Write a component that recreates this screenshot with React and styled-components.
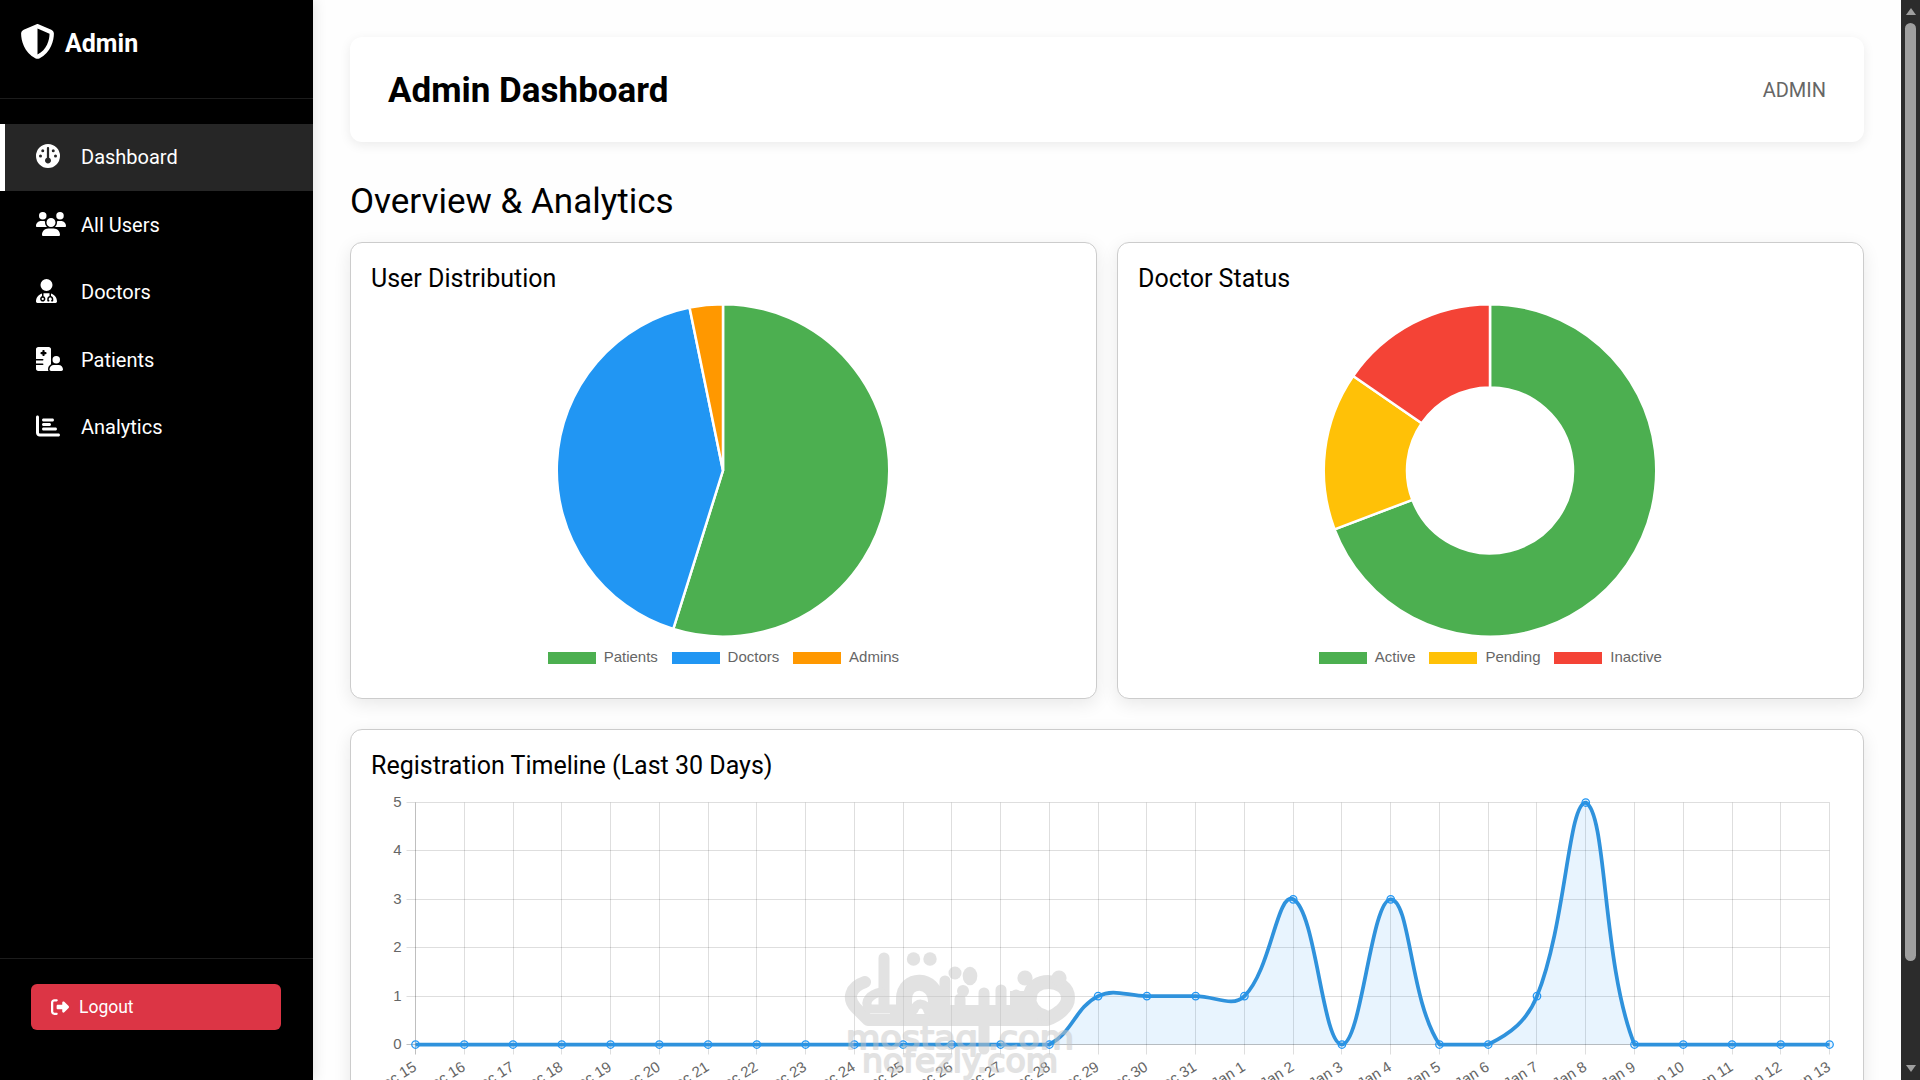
import React from "react";
import styled, { createGlobalStyle } from "styled-components";
import {
  FaShieldHalved,
  FaGauge,
  FaUsers,
  FaUserDoctor,
  FaHospitalUser,
  FaChartBar,
  FaRightFromBracket,
} from "react-icons/fa6";

const GlobalStyle = createGlobalStyle`
  *, *::before, *::after { box-sizing: border-box; }
  body { margin: 0; background: #fefefe; color: #000; font-family: Roboto, sans-serif; }
  h1, h2, h3 { margin: 0; }
`;

const Page = styled.div`
  position: relative;
  display: flex;
  width: 1920px;
  height: 1080px;
  overflow: hidden;
`;

const Sidebar = styled.aside`
  display: flex;
  flex-direction: column;
  flex: none;
  width: 313px;
  background: #000;
  color: #fff;
  box-shadow: 2px 0 12px rgba(0, 0, 0, 0.1);
`;

const Brand = styled.div`
  display: flex;
  align-items: flex-start;
  gap: 10px;
  height: 99px;
  padding: 24px 20px 0;
  border-bottom: 1px solid #1c1c1c;
  font-size: 25px;
  font-weight: 700;
  line-height: 39px;
  svg { width: 35px; height: 35px; }
`;

const Nav = styled.nav`
  display: flex;
  flex: 1;
  flex-direction: column;
  padding-top: 24.5px;
`;

const NavItem = styled.a`
  display: flex;
  align-items: center;
  height: 67.6px;
  padding: 0 0 0.5px 31px;
  border-left: 5px solid ${(p) => (p.$active ? "#fff" : "transparent")};
  background: ${(p) => (p.$active ? "#262626" : "transparent")};
  font-size: 20px;
`;

const NavIcon = styled.span`
  display: flex;
  flex: none;
  width: 45px;
  padding-bottom: 2px;
  svg { flex: none; width: ${(p) => p.$width}px; height: 24px; }
`;

const SidebarFooter = styled.div`
  height: 122px;
  padding: 25px 32px 0 31px;
  border-top: 1px solid #1c1c1c;
`;

const LogoutButton = styled.button`
  display: flex;
  align-items: center;
  gap: 10px;
  width: 100%;
  height: 46px;
  padding: 0 20px 1px;
  border: 0;
  border-radius: 6px;
  background: #dc3545;
  color: #fff;
  font: 400 17.5px Roboto, sans-serif;
  svg { width: 18px; height: 18px; }
`;

const Main = styled.main`
  display: flex;
  flex: 1;
  flex-direction: column;
  min-width: 0;
  padding: 37px 37px 0;
`;

const TopBar = styled.header`
  display: flex;
  flex: none;
  align-items: center;
  justify-content: space-between;
  height: 105px;
  padding: 1px 38px 0;
  border-radius: 12px;
  background: #fff;
  box-shadow: 0 3px 12px rgba(0, 0, 0, 0.08);
`;

const Title = styled.h1`
  padding-top: 1px;
  font-size: 35px;
  font-weight: 700;
`;

const Role = styled.span`
  color: #666;
  font-size: 20px;
`;

const SectionTitle = styled.h2`
  flex: none;
  height: 100px;
  padding-top: 38px;
  font-size: 35px;
  font-weight: 400;
  line-height: 44px;
`;

const CardRow = styled.div`
  display: grid;
  flex: none;
  grid-template-columns: 1fr 1fr;
  gap: 20px;
  margin-bottom: 30px;
`;

const Card = styled.section`
  display: flex;
  flex: none;
  flex-direction: column;
  height: ${(p) => p.$height}px;
  padding: 20px 20px 0;
  border: 1px solid #ccc;
  border-radius: 12px;
  background: #fff;
  box-shadow: 0 5px 18px rgba(0, 0, 0, 0.09);
`;

const CardTitle = styled.h3`
  font-size: 25px;
  font-weight: 400;
  line-height: 32px;
`;

const PieSvg = styled.svg`
  align-self: center;
  width: 336px;
  height: 336px;
  margin: 7px 2px 0 0;
`;

const Legend = styled.div`
  display: flex;
  justify-content: center;
  gap: 12.5px;
  margin: 9px 1.5px 0 0;
`;

const LegendItem = styled.span`
  display: flex;
  align-items: center;
  gap: 8px;
  color: #666;
  font: 15px/20px "Liberation Sans", Arial, sans-serif;
`;

const Swatch = styled.i`
  width: 48px;
  height: 12.5px;
  margin: 2px 0 0 1.25px;
  background: ${(p) => p.$color};
`;

const TimelineSvg = styled.svg`
  flex: none;
  width: 1513px;
  height: 400px;
  margin: 0 -21px;
  overflow: visible;
  font: 15px "Liberation Sans", Arial, sans-serif;
`;

const ScrollTrack = styled.div`
  display: flex;
  flex: none;
  flex-direction: column;
  align-items: center;
  width: 19px;
  padding: 8px 0;
  background: #2c2c2c;
`;

const ScrollThumb = styled.div`
  width: 11px;
  height: 938px;
  margin-top: 8px;
  border-radius: 6px;
  background: #9f9f9f;
`;

const ScrollArrow = styled.i`
  width: 0;
  height: 0;
  margin-top: ${(p) => (p.$down ? "auto" : "0")};
  border: 5px solid transparent;
  border-top: ${(p) => (p.$down ? "7px solid #9f9f9f" : "0")};
  border-bottom: ${(p) => (p.$down ? "0" : "7px solid #9f9f9f")};
`;

const WatermarkSvg = styled.svg`
  position: absolute;
  left: 838px;
  top: 945px;
  width: 250px;
  height: 135px;
  font: 32px "DejaVu Sans", sans-serif;
`;

const NAV = [
  { label: "Dashboard", Icon: FaGauge, width: 24, active: true },
  { label: "All Users", Icon: FaUsers, width: 30 },
  { label: "Doctors", Icon: FaUserDoctor, width: 21 },
  { label: "Patients", Icon: FaHospitalUser, width: 27 },
  { label: "Analytics", Icon: FaChartBar, width: 24 },
];

const USERS = [
  { label: "Patients", value: 17, color: "#4caf50" },
  { label: "Doctors", value: 13, color: "#2196f3" },
  { label: "Admins", value: 1, color: "#ff9800" },
];

const STATUS = [
  { label: "Active", value: 9, color: "#4caf50" },
  { label: "Pending", value: 2, color: "#ffc107" },
  { label: "Inactive", value: 2, color: "#f44336" },
];

function PieChart({ data, inner }) {
  const R = 166.25;
  const total = data.reduce((s, d) => s + d.value, 0);
  const at = (a, r) => `${r * Math.sin(a)} ${-r * Math.cos(a)}`;
  let from = 0;
  return (
    <>
      <PieSvg viewBox="-168 -168.4 336 336">
        {data.map((d) => {
          const a = from;
          const b = a + (d.value / total) * Math.PI * 2;
          from = b;
          const big = b - a > Math.PI ? 1 : 0;
          return (
            <path
              key={d.label}
              d={`M${at(a, R)} A${R} ${R} 0 ${big} 1 ${at(b, R)} L${at(b, inner)} A${inner} ${inner} 0 ${big} 0 ${at(a, inner)} Z`}
              fill={d.color}
              stroke="#fff"
              strokeWidth="2.5"
              strokeLinejoin="bevel"
            />
          );
        })}
      </PieSvg>
      <Legend>
        {data.map((d) => (
          <LegendItem key={d.label}>
            <Swatch $color={d.color} />
            {d.label}
          </LegendItem>
        ))}
      </Legend>
    </>
  );
}

const COUNTS = [0, 0, 0, 0, 0, 0, 0, 0, 0, 0, 0, 0, 0, 0, 1, 1, 1, 1, 3, 0, 3, 0, 0, 1, 5, 0, 0, 0, 0, 0];
const LABELS = COUNTS.map((_, i) => (i < 17 ? `Dec ${15 + i}` : `Jan ${i - 16}`));

const LEFT = 65.5;
const STEP = 48.76;
const TOP = 20.5;
const BOTTOM = 262.5;
const UNIT = (BOTTOM - TOP) / 5;
const TENSION = 0.4;

const points = COUNTS.map((v, i) => ({ x: LEFT + i * STEP, y: BOTTOM - v * UNIT }));
const clampY = (y) => Math.max(TOP, Math.min(BOTTOM, y));

/* Control points of a tension spline, kept inside the plot area. */
const controls = points.map((p, i) => {
  const prev = points[i - 1] || p;
  const next = points[i + 1] || p;
  const d0 = Math.hypot(p.x - prev.x, p.y - prev.y);
  const d1 = Math.hypot(next.x - p.x, next.y - p.y);
  const fa = (TENSION * d0) / (d0 + d1);
  const fb = (TENSION * d1) / (d0 + d1);
  return {
    inX: p.x - fa * (next.x - prev.x),
    inY: clampY(p.y - fa * (next.y - prev.y)),
    outX: p.x + fb * (next.x - prev.x),
    outY: clampY(p.y + fb * (next.y - prev.y)),
  };
});

const curve = points
  .map((p, i) =>
    i === 0
      ? `M${p.x} ${p.y}`
      : `C${controls[i - 1].outX} ${controls[i - 1].outY} ${controls[i].inX} ${controls[i].inY} ${p.x} ${p.y}`
  )
  .join(" ");

function Timeline() {
  const right = points[points.length - 1].x;
  return (
    <TimelineSvg viewBox="0 0 1513 400">
      <g stroke="#000" strokeWidth="1">
        {points.map((p, i) => {
          const x = Math.floor(p.x) + 0.5;
          return <line key={i} x1={x} x2={x} y1={TOP} y2={BOTTOM + 10} strokeOpacity={i ? 0.13 : 0.25} />;
        })}
        {[0, 1, 2, 3, 4, 5].map((v) => {
          const y = Math.round(BOTTOM - v * UNIT - 0.5) + 0.5;
          return <line key={v} x1={LEFT - 9} x2={right} y1={y} y2={y} strokeOpacity={v ? 0.13 : 0.25} />;
        })}
      </g>
      <g fill="#666">
        {[0, 1, 2, 3, 4, 5].map((v) => (
          <text key={v} x="51.5" y={BOTTOM - v * UNIT + 4.5} textAnchor="end">{v}</text>
        ))}
        {points.map((p, i) => (
          <text key={i} transform={`translate(${p.x + 2} ${BOTTOM + 25}) rotate(-32)`} textAnchor="end">{LABELS[i]}</text>
        ))}
      </g>
      <path d={`${curve} L${right} ${BOTTOM} L${LEFT} ${BOTTOM} Z`} fill="#2196f3" fillOpacity="0.1" />
      <path d={curve} fill="none" stroke="#2f92dc" strokeWidth="3.75" strokeLinejoin="round" />
      {points.map((p, i) => (
        <circle key={i} cx={p.x} cy={p.y} r="3.75" fill="#2196f3" fillOpacity="0.1" stroke="#2196f3" strokeWidth="1.25" />
      ))}
    </TimelineSvg>
  );
}

function Watermark() {
  return (
    <WatermarkSvg viewBox="0 0 250 135">
      <g opacity="0.5" fill="#c6c6c6" stroke="#c6c6c6" strokeLinecap="round" strokeLinejoin="round">
        <g fill="none" strokeWidth="11">
          <path d="M46 13 V62" />
          <path d="M27 37 C12 42 9 54 18 63 L30 75 H208" strokeWidth="12" />
          <path d="M43 47 C33 49 25 56 31 64 H64" strokeWidth="9" />
          <path d="M66 68 V54 C66 32 97 32 98 56 V70" strokeWidth="16" />
          <path d="M76 65 C78 57 88 57 90 66" strokeWidth="9" />
          <path d="M107 36 V72" />
          <path d="M122 54 V70 H150 M146 48 V104 M163 45 V70 H182 M178 50 V68" />
          <path d="M192 52 C192 32 230 32 230 53 C230 62 220 70 209 74" strokeWidth="14" />
          <path d="M192 52 C192 60 197 68 206 70" strokeWidth="12" />
        </g>
        <g stroke="none">
          <circle cx="75.5" cy="14" r="6.7" />
          <circle cx="92" cy="14" r="6.7" />
          <circle cx="117" cy="28" r="6.5" />
          <ellipse cx="132" cy="31" rx="7.3" ry="9.3" />
          <circle cx="125" cy="46" r="6" />
          <circle cx="187" cy="33" r="7.6" />
          <circle cx="221" cy="33" r="7.6" />
          <path d="M92 48 H112 V80 H92 Z M112 60 H196 V80 H112 Z M172 46 H194 V72 H172 Z M52 60 H66 V80 H52 Z" />
        </g>
        <text x="8" y="104" textLength="228" lengthAdjust="spacingAndGlyphs" strokeWidth="1.8">mostaql.com</text>
        <text x="24" y="127" textLength="196" lengthAdjust="spacingAndGlyphs" strokeWidth="1.8">nofezly.com</text>
      </g>
    </WatermarkSvg>
  );
}

export default function App() {
  return (
    <Page>
      <GlobalStyle />
      <Sidebar>
        <Brand>
          <FaShieldHalved />
          Admin
        </Brand>
        <Nav>
          {NAV.map(({ label, Icon, width, active }) => (
            <NavItem key={label} $active={active}>
              <NavIcon $width={width}><Icon /></NavIcon>
              {label}
            </NavItem>
          ))}
        </Nav>
        <SidebarFooter>
          <LogoutButton>
            <FaRightFromBracket />
            Logout
          </LogoutButton>
        </SidebarFooter>
      </Sidebar>
      <Main>
        <TopBar>
          <Title>Admin Dashboard</Title>
          <Role>ADMIN</Role>
        </TopBar>
        <SectionTitle>Overview &amp; Analytics</SectionTitle>
        <CardRow>
          <Card $height={457}>
            <CardTitle>User Distribution</CardTitle>
            <PieChart data={USERS} inner={0} />
          </Card>
          <Card $height={457}>
            <CardTitle>Doctor Status</CardTitle>
            <PieChart data={STATUS} inner={83} />
          </Card>
        </CardRow>
        <Card $height={520}>
          <CardTitle>Registration Timeline (Last 30 Days)</CardTitle>
          <Timeline />
        </Card>
      </Main>
      <ScrollTrack>
        <ScrollArrow />
        <ScrollThumb />
        <ScrollArrow $down />
      </ScrollTrack>
      <Watermark />
    </Page>
  );
}
